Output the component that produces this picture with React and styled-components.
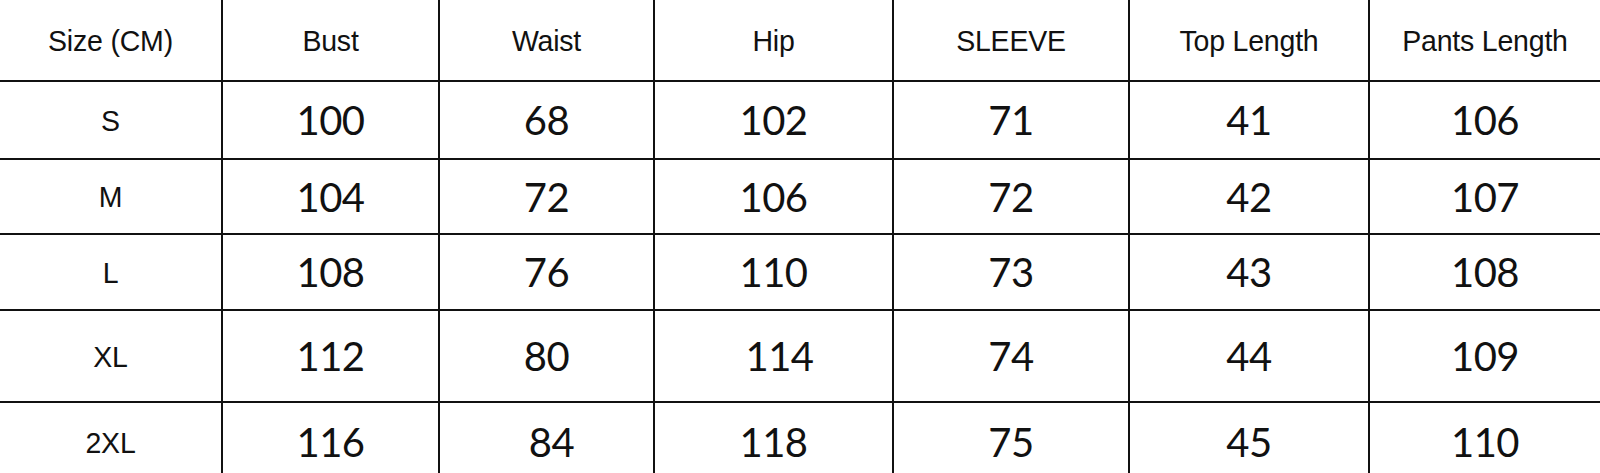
import React from "react";
import styled, { createGlobalStyle } from "styled-components";

const Global = createGlobalStyle`
  html, body { margin: 0; padding: 0; background: #ffffff; }
  body { width: 1600px; height: 473px; overflow: hidden; }
  * { box-sizing: border-box; }
`;

const LINE = "#111111";

const Table = styled.div`
  display: grid;
  grid-template-columns: 223px 217px 215px 239px 236px 240px 230px;
  grid-template-rows: 82px 78px 75px 76px 92px 80px;
  width: 1600px;
  background: #ffffff;
`;

const Cell = styled.div`
  display: flex;
  align-items: center;
  justify-content: center;
  border-bottom: 2px solid ${LINE};
  border-right: ${(p) => (p.$last ? "none" : `2px solid ${LINE}`)};
  padding-left: ${(p) => (p.$shift ? `${p.$shift * 2}px` : "0")};
  color: #111111;
  white-space: nowrap;
`;

const Label = styled.span`
  font-family: "Liberation Sans", Arial, sans-serif;
  font-size: 28.5px;
  display: inline-block;
  transform: scaleY(1.06);
  letter-spacing: -0.2px;
`;

const Num = styled.span`
  font-family: Lato, "Open Sans", sans-serif;
  font-size: 40px;
  display: inline-block;
  letter-spacing: -0.5px;
`;

const headers = ["Size (CM)", "Bust", "Waist", "Hip", "SLEEVE", "Top Length", "Pants Length"];

const rows = [
  ["S", "100", "68", "102", "71", "41", "106"],
  ["M", "104", "72", "106", "72", "42", "107"],
  ["L", "108", "76", "110", "73", "43", "108"],
  ["XL", "112", "80", "114", "74", "44", "109"],
  ["2XL", "116", "84", "118", "75", "45", "110"],
];

const shifts = { "3-3": 6, "4-2": 5 };

export default function App() {
  return (
    <>
      <Global />
      <Table>
        {headers.map((h, i) => (
          <Cell key={`h${i}`} $last={i === headers.length - 1}>
            <Label>{h}</Label>
          </Cell>
        ))}
        {rows.map((r, ri) =>
          r.map((v, ci) => (
            <Cell
              key={`${ri}-${ci}`}
              $last={ci === r.length - 1}
              $shift={shifts[`${ri}-${ci}`]}
            >
              {ci === 0 ? <Label>{v}</Label> : <Num>{v}</Num>}
            </Cell>
          ))
        )}
      </Table>
    </>
  );
}
